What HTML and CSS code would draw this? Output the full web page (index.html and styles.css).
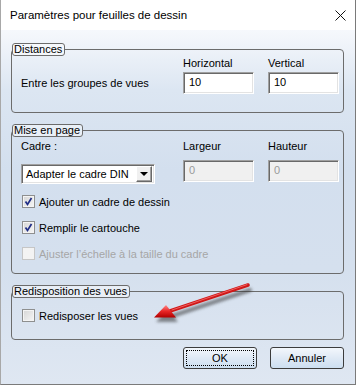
FILE: index.html
```html
<!DOCTYPE html>
<html lang="fr">
<head>
    <meta charset="UTF-8">
    <title>Paramètres pour feuilles de dessin</title>
    <link rel="stylesheet" href="styles.css">
</head>
<body>
    <div class="window">
        <div class="titlebar">
            <span class="title">Paramètres pour feuilles de dessin</span>
            <svg class="close" width="11" height="11" viewBox="0 0 11 11">
                <path d="M0.5 0.5 L10.5 10.5 M10.5 0.5 L0.5 10.5" stroke="#111" stroke-width="1" fill="none"/>
            </svg>
        </div>
        <div class="client">
            <fieldset class="group group-distances">
                <legend>Distances</legend>
                <div class="grid">
                    <span></span>
                    <span class="col-label">Horizontal</span>
                    <span class="col-label">Vertical</span>
                    <span class="row-label">Entre les groupes de vues</span>
                    <div class="field">10</div>
                    <div class="field">10</div>
                </div>
            </fieldset>

            <fieldset class="group group-page">
                <legend>Mise en page</legend>
                <div class="grid">
                    <span class="col-label">Cadre :</span>
                    <span class="col-label">Largeur</span>
                    <span class="col-label">Hauteur</span>
                    <div class="select">
                        <span class="select-text">Adapter le cadre DIN</span>
                        <span class="select-btn"><span class="tri"></span></span>
                    </div>
                    <div class="field disabled">0</div>
                    <div class="field disabled">0</div>
                </div>
                <div class="checks">
                    <label class="check">
                        <span class="box">
                            <svg width="11" height="11" viewBox="0 0 11 11"><path d="M2.5 5.5 L4.5 8.5 L8.5 2" stroke="#1f2d86" stroke-width="1.7" fill="none"/></svg>
                        </span>
                        Ajouter un cadre de dessin
                    </label>
                    <label class="check">
                        <span class="box">
                            <svg width="11" height="11" viewBox="0 0 11 11"><path d="M2.5 5.5 L4.5 8.5 L8.5 2" stroke="#1f2d86" stroke-width="1.7" fill="none"/></svg>
                        </span>
                        Remplir le cartouche
                    </label>
                    <label class="check off">
                        <span class="box"></span>
                        Ajuster l’échelle à la taille du cadre
                    </label>
                </div>
            </fieldset>

            <fieldset class="group group-views">
                <legend>Redisposition des vues</legend>
                <label class="check">
                    <span class="box"></span>
                    Redisposer les vues
                </label>
            </fieldset>

            <div class="buttons">
                <button class="btn default"><span class="focus">OK</span></button>
                <button class="btn">Annuler</button>
            </div>
        </div>

        <svg class="arrow" width="112" height="56" viewBox="0 0 112 56">
            <defs>
                <filter id="blur" x="-20%" y="-40%" width="140%" height="180%">
                    <feGaussianBlur stdDeviation="1.8"/>
                </filter>
                <linearGradient id="head" x1="0" y1="0" x2="0" y2="1">
                    <stop offset="0" stop-color="#ff8a8a"/>
                    <stop offset="0.5" stop-color="#e82626"/>
                    <stop offset="1" stop-color="#b00000"/>
                </linearGradient>
            </defs>
            <g filter="url(#blur)" opacity="0.55">
                <path d="M26 40 L104 14" stroke="#333" stroke-width="4" stroke-linecap="round"/>
                <polygon points="10,46 22,33 32,46" fill="#333"/>
            </g>
            <path d="M24 35 L102 9" stroke="#d01818" stroke-width="3.6" stroke-linecap="round"/>
            <path d="M26 34 L101 8.6" stroke="#f06060" stroke-width="1" stroke-linecap="round"/>
            <polygon points="8,41.5 20,29 30,41.5" fill="url(#head)"/>
        </svg>
    </div>
</body>
</html>
```

FILE: styles.css
```css
body {
    margin: 0;
    font-family: "Liberation Sans", Arial, sans-serif;
    font-size: 11px;
    color: #000;
}
.window {
    position: relative;
    width: 356px;
    height: 385px;
    box-sizing: border-box;
    border: 1px solid #7a7a7a;
    border-top: 0;
    border-left-color: #a8a8a8;
    background: #fff;
    display: flex;
    flex-direction: column;
}
.titlebar {
    height: 30px;
    flex-shrink: 0;
    display: flex;
    align-items: center;
    justify-content: space-between;
    padding: 0 9px;
}
.title {
    font-size: 11.5px;
    color: #000;
}
.client {
    flex: 1;
    padding: 13px 11px 0 10px;
    background: linear-gradient(to bottom, #f6f8fc 0, #dce6f2 60px, #d3dfee 140px, #d5e0ee 240px, #dfe7f2 100%);
}

/* group boxes */
.group {
    margin: 0;
    padding: 0 4px 0 9px;
    border: 1px solid #6c6c6c;
    border-radius: 4px;
    min-width: 0;
}
.group legend {
    margin-left: -9px;
    padding: 0 2px 0 1px;
    border: 1px solid #6c6c6c;
    border-radius: 3px;
    line-height: 11px;
    background: rgba(255, 255, 255, 0.45);
}
.grid {
    display: grid;
    grid-template-columns: 148px 71px 71px;
    column-gap: 14px;
}
.col-label {
    line-height: 14px;
}
.row-label {
    align-self: center;
}
.group-distances {
    padding-bottom: 18px;
}
.group-distances .grid {
    row-gap: 2px;
}
.group-page {
    margin-top: 11px;
    padding-top: 2px;
    padding-bottom: 13px;
}
.group-page .grid {
    row-gap: 7px;
}
.group-views {
    margin-top: 11px;
    padding-top: 11px;
    padding-bottom: 17px;
}

/* edit fields */
.field {
    height: 22px;
    box-sizing: border-box;
    padding: 0 5px;
    line-height: 18px;
    background: #fff;
    border: 1px solid;
    border-color: #a0a0a0 #fff #fff #a0a0a0;
    box-shadow: inset 1px 1px 0 #696969, inset -1px -1px 0 #e3e3e3;
}
.field.disabled {
    background: #f0f0f0;
    color: #9a9a9a;
    line-height: 14px;
    padding-top: 2px;
}
.select {
    margin-top: 4px;
    width: 134px;
    height: 20px;
    box-sizing: border-box;
    display: flex;
    align-items: center;
    justify-content: space-between;
    padding: 2px 2px 2px 4px;
    background: #fff;
    border: 1px solid;
    border-color: #a0a0a0 #fff #fff #a0a0a0;
    box-shadow: inset 1px 1px 0 #696969, inset -1px -1px 0 #e3e3e3;
}
.select-btn {
    width: 16px;
    height: 16px;
    box-sizing: border-box;
    display: flex;
    align-items: center;
    justify-content: center;
    background: #f0f0f0;
    border: 1px solid;
    border-color: #fff #696969 #696969 #fff;
    box-shadow: inset -1px -1px 0 #a0a0a0;
}
.tri {
    width: 0;
    height: 0;
    border-left: 4px solid transparent;
    border-right: 4px solid transparent;
    border-top: 4px solid #000;
}

/* check boxes */
.checks {
    margin-top: 11px;
    display: flex;
    flex-direction: column;
    gap: 13px;
}
.check {
    display: flex;
    align-items: center;
    gap: 4px;
    height: 13px;
    padding-left: 1px;
}
.box {
    width: 13px;
    height: 13px;
    box-sizing: border-box;
    border: 1px solid #8e8f8f;
    background: linear-gradient(135deg, #d6d6d6, #f6f6f6);
    box-shadow: inset 0 0 0 1px #f4f4f4;
    display: flex;
    align-items: center;
    justify-content: center;
}
.check.off {
    color: #a6a6a6;
}
.check.off .box {
    border-color: #c6c6c6;
    background: #f3f3f3;
    box-shadow: none;
}

/* buttons */
.buttons {
    margin-top: 7px;
    display: flex;
    justify-content: flex-end;
    gap: 13px;
}
.btn {
    width: 74px;
    height: 22px;
    padding: 0;
    font-family: "Liberation Sans", Arial, sans-serif;
    font-size: 11px;
    color: #000;
    border: 1px solid #3c3c3c;
    border-radius: 3px;
    background: linear-gradient(to bottom, #f3f7fc, #dfe9f5 50%, #cddff1);
    display: flex;
    align-items: center;
    justify-content: center;
}
.btn.default {
    padding: 2px;
}
.btn .focus {
    flex: 1;
    align-self: stretch;
    display: flex;
    align-items: center;
    justify-content: center;
    border: 1px dotted #000;
}

.arrow {
    position: absolute;
    left: 145px;
    top: 276px;
}
```
